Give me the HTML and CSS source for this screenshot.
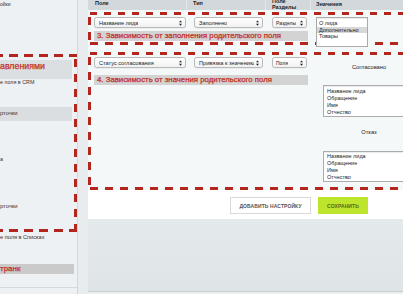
FILE: index.html
```html
<!DOCTYPE html>
<html lang="ru">
<head>
<meta charset="utf-8">
<title>Настройки зависимостей полей</title>
<link rel="stylesheet" href="styles.css">
</head>
<body>
<div class="page">
  <aside class="sidebar">
    <div class="sb-item sb-top">ойки</div>
    <div class="sb-box">
      <div class="sb-band sb-band-red">авлениями</div>
      <div class="sb-item">е поля в CRM</div>
      <div class="sb-band sb-band-plain">рточки</div>
      <div class="sb-item sb-a">а</div>
      <div class="sb-item sb-b">рточки</div>
    </div>
    <div class="sb-item sb-lists">е поля в Списках</div>
    <div class="sb-band sb-band-grey">транк</div>
    <div class="sb-rule"></div>
  </aside>
  <div class="gutter"></div>
  <main class="main">
    <section class="panel">
      <div class="thead">
        <div class="th th-field">Поле</div>
        <div class="th th-type">Тип</div>
        <div class="th th-sect"><span>Поле</span><span>Разделы</span></div>
        <div class="th th-vals">Значения</div>
      </div>

      <div class="rule-box box1">
        <div class="rule-left">
          <div class="sel-row">
            <div class="select w1"><span>Название лида</span><svg class="arr" viewBox="0 0 4 7"><path d="M2 0L4 2.6H0zM2 7L4 4.4H0z"/></svg></div>
            <div class="select w2"><span>Заполнено</span><svg class="arr" viewBox="0 0 4 7"><path d="M2 0L4 2.6H0zM2 7L4 4.4H0z"/></svg></div>
            <div class="select w3"><span>Разделы</span><svg class="arr" viewBox="0 0 4 7"><path d="M2 0L4 2.6H0zM2 7L4 4.4H0z"/></svg></div>
          </div>
          <div class="heading">3. Зависимость от заполнения родительского поля</div>
        </div>
        <div class="listbox lb-small">
          <div class="opt">О лида</div>
          <div class="opt sel">Дополнительно</div>
          <div class="opt">Товары</div>
        </div>
      </div>

      <div class="rule-box box2">
        <div class="rule-left">
          <div class="sel-row">
            <div class="select w1"><span>Статус согласования</span><svg class="arr" viewBox="0 0 4 7"><path d="M2 0L4 2.6H0zM2 7L4 4.4H0z"/></svg></div>
            <div class="select w2"><span>Привязка к значению</span><svg class="arr" viewBox="0 0 4 7"><path d="M2 0L4 2.6H0zM2 7L4 4.4H0z"/></svg></div>
            <div class="select w3"><span>Поля</span><svg class="arr" viewBox="0 0 4 7"><path d="M2 0L4 2.6H0zM2 7L4 4.4H0z"/></svg></div>
          </div>
          <div class="heading">4. Зависимость от значения родительского поля</div>
        </div>
        <div class="values">
          <div class="val-label v1">Согласовано</div>
          <div class="listbox lb-wide lb-a">
            <div class="opt">Название лида</div>
            <div class="opt">Обращение</div>
            <div class="opt">Имя</div>
            <div class="opt">Отчество</div>
          </div>
          <div class="val-label v2">Отказ</div>
          <div class="listbox lb-wide lb-b">
            <div class="opt">Название лида</div>
            <div class="opt">Обращение</div>
            <div class="opt">Имя</div>
            <div class="opt">Отчество</div>
          </div>
        </div>
      </div>

      <div class="actions">
        <button class="btn btn-add" type="button">Добавить настройку</button>
        <button class="btn btn-save" type="button">Сохранить</button>
      </div>
    </section>
    <div class="below"></div>
  </main>
</div>
</body>
</html>
```
FILE: styles.css
```css
* {
  box-sizing: border-box;
  margin: 0;
  padding: 0;
}

html, body {
  width: 403px;
  height: 294px;
  overflow: hidden;
}

body {
  font-family: "Liberation Sans", Arial, sans-serif;
  background: #e2e7ea;
  color: #222;
}

.page {
  display: flex;
  width: 403px;
  height: 294px;
  overflow: hidden;
}

/* ---------- sidebar ---------- */
.sidebar {
  width: 78px;
  flex: none;
  background: #eef1f3;
  border-right: 1px solid #d3d8db;
  display: flex;
  flex-direction: column;
}

.sb-item {
  font-size: 5.4px;
  line-height: 6px;
  height: 6px;
  color: #333;
  white-space: nowrap;
}

.sb-top {
  height: 8px;
  line-height: 8px;
  font-size: 5px;
}

.sb-box {
  --d: #b3261e;
  margin-top: 46px;
  margin-left: -10px;
  width: 87px;
  padding: 0 5px 23px 10px;
  background:
    repeating-linear-gradient(90deg, transparent 0 4px, var(--d) 4px 13px, transparent 13px 15px) left top / 100% 3px no-repeat,
    repeating-linear-gradient(90deg, transparent 0 4px, var(--d) 4px 13px, transparent 13px 15px) left bottom / 100% 3px no-repeat,
    repeating-linear-gradient(180deg, transparent 0 5px, var(--d) 5px 13px, transparent 13px 15px) right top / 3px 100% no-repeat;
}

.sb-band {
  white-space: nowrap;
}

.sb-band-red {
  margin-top: 6px;
  height: 19px;
  padding-top: 2px;
  background: #dcdfe2;
  color: #c22f25;
  font-size: 8.8px;
  -webkit-text-stroke: 0.25px #c22f25;
  line-height: 9px;
}

.sb-band-plain {
  margin-top: 22px;
  height: 14px;
  line-height: 13px;
  background: #dadee1;
  font-size: 5.8px;
  color: #333;
}

.sb-a {
  margin-top: 35px;
}

.sb-b {
  margin-top: 41px;
  font-size: 5.8px;
}

.sb-lists {
  margin-top: 2px;
  font-size: 5.6px;
}

.sb-band-grey {
  margin-top: 24px;
  width: 74px;
  height: 10px;
  line-height: 10px;
  background: #cacaca;
  color: #c22f25;
  font-size: 8px;
  -webkit-text-stroke: 0.25px #c22f25;
}

.sb-rule {
  margin-top: 13px;
  height: 1px;
  background: #d5d9dc;
}

.gutter {
  width: 10px;
  flex: none;
  background: #e8ecee;
}

/* ---------- main ---------- */
.main {
  width: 315px;
  flex: none;
  display: flex;
  flex-direction: column;
}

.panel {
  height: 219px;
  flex: none;
  background: #f5f8f9;
  display: flex;
  flex-direction: column;
}

.thead {
  height: 10px;
  flex: none;
  display: flex;
  background: #d3d8dc;
  overflow: hidden;
  font-weight: bold;
  font-size: 5.5px;
  line-height: 6px;
  color: #222;
}

.th {
  white-space: nowrap;
  overflow: hidden;
}

.th-field {
  width: 98px;
  padding-left: 7px;
}

.th-type {
  width: 79px;
  padding-left: 6px;
  border-left: 1px solid #e3e7e9;
}

.th-sect {
  width: 45px;
  padding-left: 6px;
  border-left: 1px solid #e3e7e9;
  display: flex;
  flex-direction: column;
  justify-content: flex-end;
}

.th-vals {
  flex: 1;
  padding-left: 5px;
  padding-top: 0.5px;
  border-left: 1px solid #e3e7e9;
}

/* dashed annotation boxes */
.rule-box {
  --d: #b3261e;
  display: flex;
  align-items: flex-start;
  padding: 5px 0 0 6px;
  background:
    repeating-linear-gradient(90deg, transparent 0 2px, var(--d) 2px 9px, transparent 9px 14px) left top / 100% 3px no-repeat,
    repeating-linear-gradient(90deg, transparent 0 2px, var(--d) 2px 10px, transparent 10px 15px) left bottom / 100% 3px no-repeat,
    repeating-linear-gradient(180deg, transparent 0 5px, var(--d) 5px 13px, transparent 13px 15px) left top / 3px 100% no-repeat;
}

.box1 {
  margin-top: 2px;
  height: 33px;
  flex: none;
}

.box2 {
  margin-top: 7px;
  padding-bottom: 8px;
  flex: none;
}

.rule-left {
  width: 214px;
  flex: none;
  display: flex;
  flex-direction: column;
}

.sel-row {
  display: flex;
  height: 11px;
}

.select {
  height: 11px;
  display: flex;
  align-items: center;
  justify-content: space-between;
  padding: 0 3px 0 4px;
  border: 1px solid #b9b9b9;
  border-radius: 2.5px;
  background: linear-gradient(#ffffff, #f1f1f1);
  box-shadow: 0 0.5px 0.5px rgba(0, 0, 0, 0.08);
  font-size: 5.6px;
  color: #222;
  white-space: nowrap;
  overflow: hidden;
}

.select span {
  overflow: hidden;
}

.w1 { width: 92px; }
.w2 { width: 69px; margin-left: 8px; }
.w3 {
  width: 35px;
  margin-left: 9px;
  padding: 0 3px 0 3px;
  font-size: 5px;
}

.arr {
  width: 3px;
  height: 6px;
  flex: none;
  fill: #222;
}

.heading {
  margin-top: 3px;
  height: 10px;
  padding-left: 3px;
  background: #d3d3d3;
  color: #c22f25;
  font-size: 7.8px;
  -webkit-text-stroke: 0.25px #c22f25;
  line-height: 10px;
  white-space: nowrap;
  overflow: hidden;
}

.box2 .heading {
  margin-top: 7px;
}

.listbox {
  background: #fff;
  border: 1px solid #ababab;
  box-shadow: inset 0 1px 1px rgba(0, 0, 0, 0.08);
  font-size: 5.5px;
  color: #222;
  white-space: nowrap;
  overflow: hidden;
}

.lb-small {
  width: 52px;
  height: 30px;
  margin-left: 8px;
  flex: none;
  padding-top: 2px;
  line-height: 6.5px;
}

.lb-small .opt {
  padding-left: 2px;
}

.opt.sel {
  background: #d7d7d7;
}

.values {
  width: 92px;
  margin-left: 15px;
  flex: none;
  display: flex;
  flex-direction: column;
}

.val-label {
  height: 10px;
  line-height: 10px;
  text-align: center;
  font-size: 5.7px;
  color: #222;
}

.v1 { margin-top: 5px; }
.v2 { margin-top: 10px; }

.lb-wide {
  line-height: 7px;
  padding-top: 2px;
}

.lb-wide .opt {
  padding-left: 3px;
}

.lb-a {
  margin-top: 13px;
  height: 32px;
}

.lb-b {
  margin-top: 14px;
  height: 31px;
  padding-top: 1px;
}

/* footer buttons */
.actions {
  flex: 1;
  display: flex;
  justify-content: flex-end;
  align-items: flex-start;
  gap: 7px;
  padding: 7px 35px 0 0;
  background: #fff;
}

.btn {
  height: 17px;
  font-family: "Liberation Sans", Arial, sans-serif;
  font-size: 5px;
  font-weight: bold;
  text-transform: uppercase;
  letter-spacing: 0.1px;
  border: 1px solid #d9d9d9;
  background: #fff;
  color: #555;
  cursor: pointer;
}

.btn-add {
  width: 81px;
}

.btn-save {
  width: 50px;
  background: #bde52b;
  border-color: #bde52b;
  color: #57671c;
}

.below {
  flex: 1;
  background: linear-gradient(to bottom, #e4e9ec 0, #dfe4e7 72px, #c9ced1 72px, #c9ced1 73px, #eaedef 73px);
}
```
